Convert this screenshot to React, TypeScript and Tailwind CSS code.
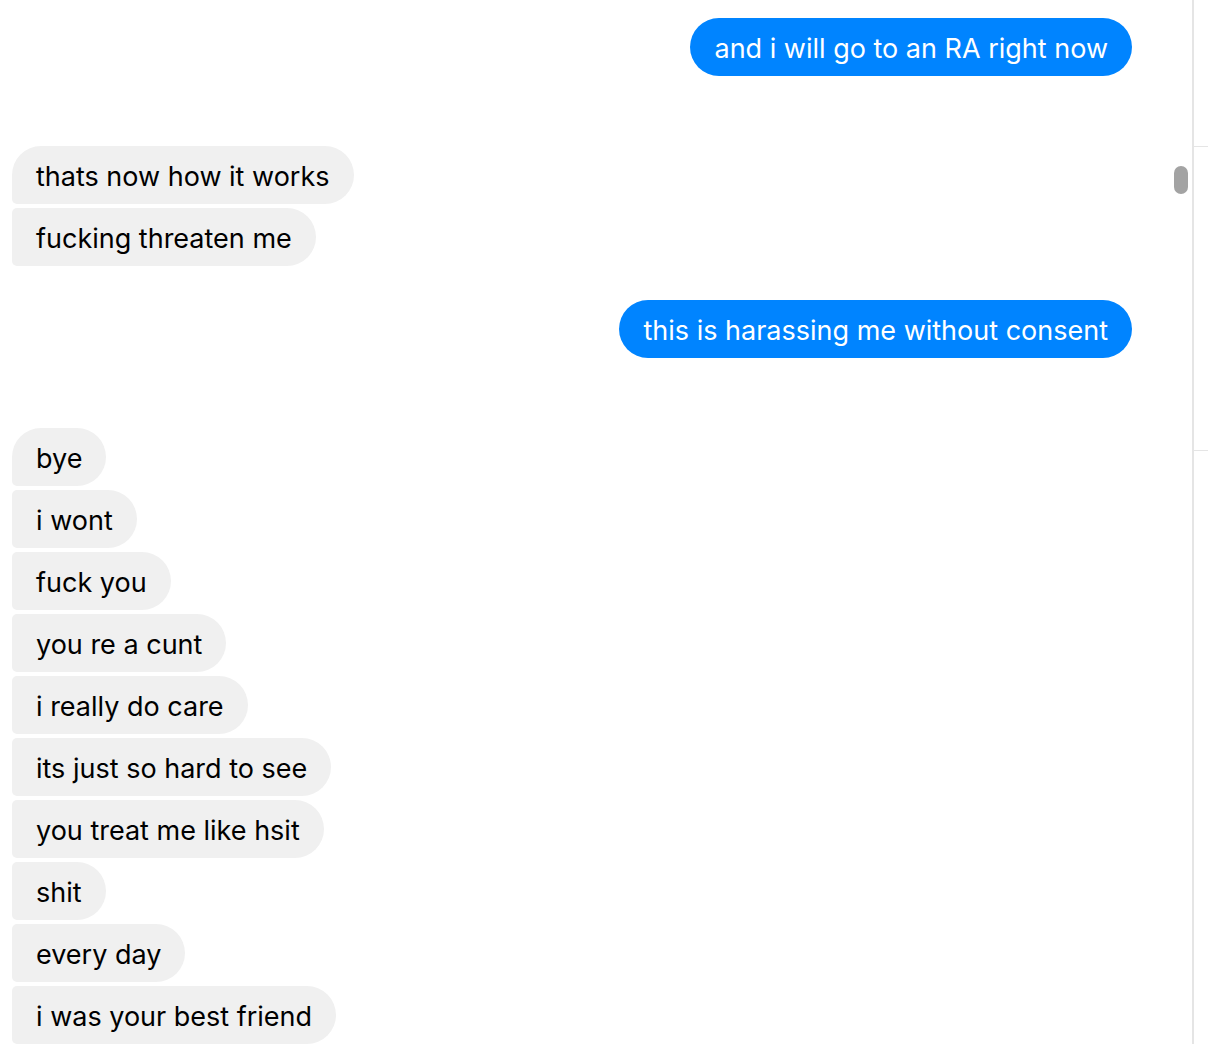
import React from "react";

function Out({ text }: { text: string }) {
  return (
    <div className="flex justify-end pr-[60px]">
      <div className="h-[58px] flex items-center pt-[5px] px-6 rounded-[29px] bg-[#0084ff] text-white text-[27px] whitespace-nowrap">
        {text}
      </div>
    </div>
  );
}

function In({ text, pos }: { text: string; pos: "first" | "mid" }) {
  const shape =
    pos === "first"
      ? "rounded-tl-[29px] rounded-bl-[5px]"
      : "rounded-tl-[5px] rounded-bl-[5px]";
  return (
    <div className="flex justify-start pl-3">
      <div
        className={`h-[58px] flex items-center pt-[5px] px-6 rounded-tr-[29px] rounded-br-[29px] bg-[#f0f0f0] text-black text-[27px] whitespace-nowrap ${shape}`}
      >
        {text}
      </div>
    </div>
  );
}

export default function App() {
  const group2 = [
    "i wont",
    "fuck you",
    "you re a cunt",
    "i really do care",
    "its just so hard to see",
    "you treat me like hsit",
    "shit",
    "every day",
    "i was your best friend",
  ];
  return (
    <div
      className="w-[1208px] h-[1044px] overflow-hidden bg-white flex"
      style={{ fontFamily: "Inter, 'Open Sans', sans-serif" }}
    >
      <div className="relative w-[1192px] h-full">
        <div className="flex flex-col pt-[18px]">
          <Out text="and i will go to an RA right now" />
          <div className="h-[70px]" />
          <div className="flex flex-col gap-1">
            <In text="thats now how it works" pos="first" />
            <In text="fucking threaten me" pos="mid" />
          </div>
          <div className="h-[34px]" />
          <Out text="this is harassing me without consent" />
          <div className="h-[70px]" />
          <div className="flex flex-col gap-1">
            <In text="bye" pos="first" />
            {group2.map((t) => (
              <In key={t} text={t} pos="mid" />
            ))}
          </div>
        </div>
        <div className="absolute left-[1174px] top-[166px] w-[14px] h-[28px] rounded-full bg-[#a3a3a3]" />
      </div>
      <div className="w-[2px] h-full bg-[#e5e5e5]" />
      <div className="flex-1 flex flex-col">
        <div className="h-[146px]" />
        <div className="h-px bg-[#e5e5e5]" />
        <div className="h-[303px]" />
        <div className="h-px bg-[#e5e5e5]" />
      </div>
    </div>
  );
}
